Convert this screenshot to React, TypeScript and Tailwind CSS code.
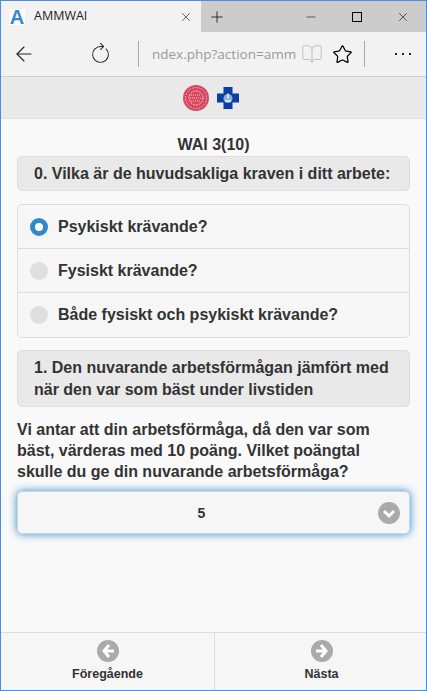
import { ArrowLeft, RotateCw, X, Plus, Minus, Star, BookOpen } from "lucide-react";

const options = [
  { label: "Psykiskt krävande?", checked: true },
  { label: "Fysiskt krävande?", checked: false },
  { label: "Både fysiskt och psykiskt krävande?", checked: false },
];

function Seal() {
  return (
    <svg width="26" height="26" viewBox="0 0 26 26">
      <circle cx="13" cy="13" r="13" fill="#d9475f" />
      <circle cx="13" cy="13" r="10.5" fill="none" stroke="#f3c3cb" strokeWidth="1" strokeDasharray="1.5 1.5" />
      <circle cx="13" cy="13" r="7" fill="none" stroke="#f3c3cb" strokeWidth="1" strokeDasharray="2 1" />
      <path d="M8 10h10M7 13h12M8 16h10" stroke="#f3c3cb" strokeWidth="1" strokeDasharray="1 1" />
    </svg>
  );
}

function BlueCross() {
  return (
    <svg width="24" height="24" viewBox="0 0 24 24">
      <path d="M7.5 1h9v6.5H23v9h-6.5V23h-9v-6.5H1v-9h6.5z" fill="#0b3ea3" />
      <circle cx="12" cy="12.5" r="4.5" fill="#8fb0d8" />
      <path d="M9 15h6M12 7.5v5" stroke="#e8eef7" strokeWidth="1.6" />
    </svg>
  );
}

function RoundIcon({ dir }: { dir: "left" | "right" | "down" }) {
  const d = {
    left: "M12 5 L7 11 L12 17 M7.5 11 H17",
    right: "M10 5 L15 11 L10 17 M14.5 11 H5",
    down: "M6 9 L11 14 L16 9",
  }[dir];
  return (
    <svg width="22" height="22" viewBox="0 0 22 22" className="block">
      <circle cx="11" cy="11" r="11" fill="#aaaaaa" />
      <path d={d} fill="none" stroke="#fff" strokeWidth="3" />
    </svg>
  );
}

export default function App() {
  return (
    <div className="w-[427px] h-[691px] flex flex-col overflow-hidden border border-[#4a90d9] bg-[#f9f9f9] text-[#333] font-['Liberation_Sans',sans-serif]">
      {/* browser chrome */}
      <div className="h-[31px] flex bg-[#cccccc] text-black shrink-0">
        <div className="w-[200px] bg-[#f2f2f2] flex items-center pl-[8px] pr-[8px]">
          <span className="w-4 h-4 bg-white flex items-center justify-center text-[#3b86d0] text-[20px] font-bold">A</span>
          <span className="ml-[9px] flex-1 text-[12.5px] font-['Open_Sans',sans-serif] text-[#222]">AMMWAI</span>
          <X size={14} strokeWidth={1} />
        </div>
        <div className="w-[32px] flex items-center justify-center">
          <Plus size={18} strokeWidth={1} />
        </div>
        <div className="flex-1 flex items-center justify-end">
          <div className="w-[46px] flex justify-center"><Minus size={14} strokeWidth={1} /></div>
          <div className="w-[46px] flex justify-center"><span className="w-[10px] h-[10px] border border-black" /></div>
          <div className="w-[46px] flex justify-center"><X size={14} strokeWidth={1} /></div>
        </div>
      </div>
      <div className="h-[45px] flex items-center bg-[#f2f2f2] border-b border-[#cfcfcf] text-[#222] shrink-0">
        <div className="w-[46px] flex justify-center"><ArrowLeft size={24} strokeWidth={1.1} /></div>
        <div className="w-[30px]" />
        <div className="w-[46px] flex justify-center"><RotateCw size={21} strokeWidth={1.1} className="-rotate-45" /></div>
        <div className="ml-[15px] w-px h-[26px] bg-[#a8a8a8]" />
        <div className="ml-[13px] w-[146px] whitespace-nowrap text-[13.5px] text-[#9a9a9a] font-['Open_Sans',sans-serif]">ndex.php?action=amm</div>
        <div className="ml-[3px]"><BookOpen size={22} strokeWidth={1} className="text-[#bdbdbd]" /></div>
        <div className="ml-[9px]"><Star size={21} strokeWidth={1.4} className="text-black" /></div>
        <div className="ml-[11px] w-px h-[26px] bg-[#a8a8a8]" />
        <div className="flex-1 flex justify-center gap-[5px] pl-[14px]">
          <span className="w-[2px] h-[2px] bg-[#222]" />
          <span className="w-[2px] h-[2px] bg-[#222]" />
          <span className="w-[2px] h-[2px] bg-[#222]" />
        </div>
      </div>

      {/* page header */}
      <div className="h-[42px] bg-[#e9e9e9] border-b border-[#dddddd] flex items-center justify-center gap-[7px] pr-[4px] shrink-0">
        <Seal />
        <BlueCross />
      </div>

      <div className="flex-1 flex flex-col px-4 font-bold text-[16px] leading-[22px]">
        <h1 className="mt-[14px] text-center leading-[23px]">WAI 3(10)</h1>
        <div className="h-[35px] flex items-center px-4 bg-[#e9e9e9] border border-[#dddddd] rounded-[5px]">
          0. Vilka är de huvudsakliga kraven i ditt arbete:
        </div>

        <div className="mt-[13px] border border-[#dddddd] rounded-[5px] bg-[#f6f6f6]">
          {options.map((o, i) => (
            <div key={o.label} className={`flex items-center pl-[12px] ${i === 0 ? "h-[43px]" : i === 1 ? "h-[44px] border-t border-[#dddddd]" : "h-[45px] border-t border-[#dddddd]"}`}>
              {o.checked ? (
                <span className="w-[18px] h-[18px] rounded-full border-[5px] border-[#3388cc] bg-white" />
              ) : (
                <span className="w-[18px] h-[18px] rounded-full bg-[#dfdfdf]" />
              )}
              <span className="ml-[10px]">{o.label}</span>
            </div>
          ))}
        </div>

        <div className="mt-[12px] h-[57px] flex items-center px-4 bg-[#e9e9e9] border border-[#dddddd] rounded-[5px]">
          1. Den nuvarande arbetsförmågan jämfört med när den var som bäst under livstiden
        </div>

        <p className="mt-[12px] pr-[14px] leading-[21px]">
          Vi antar att din arbetsförmåga, då den var som bäst, värderas med 10 poäng. Vilket poängtal skulle du ge din nuvarande arbetsförmåga?
        </p>

        <div className="relative mt-[9px] h-[43px] flex items-center justify-center pr-[24px] bg-[#f6f6f6] border border-[#c5d8ea] rounded-[5px] shadow-[0_0_8px_#3388cc] text-[14px]">
          5
          <span className="absolute right-[9px] top-[10px]"><RoundIcon dir="down" /></span>
        </div>
      </div>

      {/* footer nav */}
      <div className="h-[58px] flex bg-[#f6f6f6] border-t border-[#dddddd] text-[12.5px] font-bold shrink-0">
        <div className="w-[214px] border-r border-[#dddddd] flex flex-col items-center pt-[7px] gap-[3px]">
          <RoundIcon dir="left" />
          <span>Föregående</span>
        </div>
        <div className="flex-1 flex flex-col items-center pt-[7px] pl-[2px] gap-[3px]">
          <RoundIcon dir="right" />
          <span>Nästa</span>
        </div>
      </div>
    </div>
  );
}
